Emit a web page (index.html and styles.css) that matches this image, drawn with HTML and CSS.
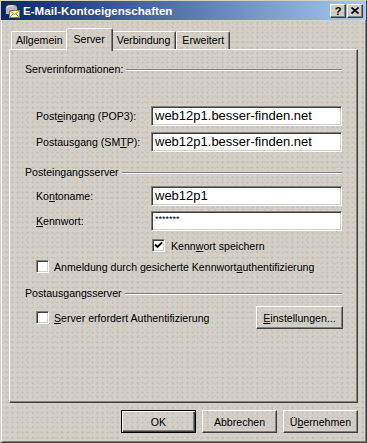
FILE: index.html
```html
<!DOCTYPE html>
<html>
<head>
    <meta charset="utf-8">
    <link rel="stylesheet" href="styles.css">
</head>
<body>
    <div class="window face">
        <!-- Titelleiste -->
        <div class="titleBar">
            <svg class="appIcon" width="16" height="16" viewBox="0 0 16 16">
                <path d="M1.5 5.5 Q1.5 1.5 6 1.5 L9 1.5 Q13.5 1.5 13.5 5.5 L13.5 11.5 L1.5 11.5 Z" fill="#b8b8b8" stroke="#303030"/>
                <path d="M3 5 Q3 3 6 3 L9 3" fill="none" stroke="#f0f0f0"/>
                <rect x="5.5" y="7.5" width="10" height="7" fill="#ffffb0" stroke="#808060"/>
                <path d="M5.5 7.5 L10.5 11.5 L15.5 7.5 M5.5 14.5 L9 11 M15.5 14.5 L12 11" fill="none" stroke="#a0a070"/>
            </svg>
            <span class="title">E-Mail-Kontoeigenschaften</span>
            <div class="capButtons">
                <span class="capBtn face">?</span>
                <span class="capBtn face">
                    <svg width="8" height="7" viewBox="0 0 8 7"><path d="M0.5 0.5 L7.5 6.5 M7.5 0.5 L0.5 6.5" stroke="#000" stroke-width="1.6"/></svg>
                </span>
            </div>
        </div>

        <div class="dialogBody">
            <!-- Registerkarten -->
            <div class="tabs">
                <div class="tab tabFirst">Allgemein</div>
                <div class="tab active face">Server</div>
                <div class="tab">Verbindung</div>
                <div class="tab">Erweitert</div>
            </div>

            <div class="panel">
                <div class="group">Serverinformationen:</div>

                <div class="field firstField">
                    <label>Post<u>e</u>ingang (POP3):</label>
                    <div class="textBox">web12p1.besser-finden.net</div>
                </div>
                <div class="field">
                    <label>Postausgang (SM<u>T</u>P):</label>
                    <div class="textBox">web12p1.besser-finden.net</div>
                </div>

                <div class="group groupNext">Posteingangsserver</div>

                <div class="field fieldTight">
                    <label>Ko<u>n</u>toname:</label>
                    <div class="textBox">web12p1</div>
                </div>
                <div class="field fieldTight2">
                    <label><u>K</u>ennwort:</label>
                    <div class="textBox password">*******</div>
                </div>

                <div class="check checkSave">
                    <span class="box"><svg width="9" height="9" viewBox="0 0 9 9"><path d="M1 3.5 L3.5 6 L8 1.5" fill="none" stroke="#000" stroke-width="1.8"/></svg></span>
                    <span>Kenn<u>w</u>ort speichern</span>
                </div>
                <div class="check checkSpa">
                    <span class="box"></span>
                    <span>Anmeldung durch gesicherte Kennwort<u>a</u>uthentifizierung</span>
                </div>

                <div class="group groupNext">Postausgangsserver</div>

                <div class="smtpRow">
                    <div class="check">
                        <span class="box"></span>
                        <span><u>S</u>erver erfordert Authentifizierung</span>
                    </div>
                    <div class="button settingsBtn"><u>E</u>instellungen...</div>
                </div>
            </div>

            <!-- Schaltflächen -->
            <div class="buttonRow">
                <div class="button default">OK</div>
                <div class="button">Abbrechen</div>
                <div class="button">Ü<u>b</u>ernehmen</div>
            </div>
        </div>
    </div>
</body>
</html>
```

FILE: styles.css
```css
html, body {
    margin: 0;
    padding: 0;
    background: #d4d0c8;
}

body {
    font-family: "Liberation Sans", Arial, sans-serif;
    font-size: 10.6px;
    color: #000;
}

/* Fläche mit leichter Körnung, fest am Fenster ausgerichtet */
.face {
    background-color: #d4d0c8;
    background-image:
        radial-gradient(circle, rgba(0, 0, 0, 0.07) 0.8px, transparent 1.3px),
        radial-gradient(circle, rgba(0, 0, 0, 0.05) 0.8px, transparent 1.3px);
    background-size: 5px 5px, 7px 6px;
    background-position: 0 0, 2px 3px;
    background-attachment: fixed;
}

.window {
    width: 367px;
    height: 443px;
    box-sizing: border-box;
    border: 1px solid;
    border-color: #d4d0c8 #404040 #404040 #d4d0c8;
    box-shadow: inset 1px 1px #fff, inset -1px -1px #808080;
    display: flex;
    flex-direction: column;
}

.titleBar {
    height: 19px;
    display: flex;
    align-items: center;
    background: linear-gradient(to right, #0a246a, #a6caf0);
    color: #fff;
    padding-left: 3px;
}

.appIcon {
    flex: none;
    margin-right: 3px;
}

.title {
    font-weight: bold;
    font-size: 11.6px;
    flex: 1 1 auto;
}

.capButtons {
    display: flex;
    gap: 1px;
    margin-right: 3px;
}

.capBtn {
    width: 16px;
    height: 14px;
    box-sizing: border-box;
    display: flex;
    align-items: center;
    justify-content: center;
    color: #000;
    font-weight: bold;
    font-size: 11px;
    border: 1px solid;
    border-color: #fff #404040 #404040 #fff;
    box-shadow: inset -1px -1px #808080;
}

.dialogBody {
    flex: 1 1 auto;
    padding: 8px 8px 0 8px;
    display: flex;
    flex-direction: column;
}

/* Registerkarten */
.tabs {
    display: flex;
    align-items: flex-end;
    height: 21px;
    padding-left: 2px;
}

.tab {
    height: 18px;
    box-sizing: border-box;
    line-height: 17px;
    padding: 0 5px;
    border-top: 1px solid #fff;
    border-left: 1px solid #fff;
    border-right: 1px solid #404040;
    border-radius: 2px 2px 0 0;
    box-shadow: inset -1px 0 #808080;
}

.tabFirst {
    padding: 0 4px;
}

.tab.active {
    height: 23px;
    margin: 0 -2px -2px -2px;
    padding: 1px 7px 0 7px;
    line-height: 18px;
    position: relative;
    z-index: 1;
}

.panel {
    height: 354px;
    box-sizing: border-box;
    border: 1px solid;
    border-color: #fff #404040 #404040 #fff;
    box-shadow: inset -1px -1px #808080;
    padding: 13px 15px 0 15px;
    display: flex;
    flex-direction: column;
}

.group {
    display: flex;
    align-items: center;
    height: 13px;
    line-height: 13px;
}

.group::after {
    content: "";
    flex: 1 1 auto;
    height: 0;
    border-top: 1px solid #808080;
    border-bottom: 1px solid #fff;
    margin-left: 3px;
}

.groupNext {
    margin-top: 14px;
}

.field {
    display: flex;
    align-items: center;
    margin-top: 6px;
    padding-left: 11px;
}

.firstField {
    margin-top: 30px;
}

.fieldTight {
    margin-top: 7px;
}

.fieldTight2 {
    margin-top: 5px;
}

.field label {
    width: 115px;
    flex: none;
}

.textBox {
    width: 191px;
    height: 20px;
    box-sizing: border-box;
    background: #fff;
    border: 1px solid;
    border-color: #808080 #fff #fff #808080;
    box-shadow: inset 1px 1px #404040, inset -1px -1px #d4d0c8;
    font-size: 13px;
    line-height: 18px;
    padding-left: 3px;
}

.password {
    font-size: 9px;
    line-height: 15px;
}

.check {
    display: flex;
    align-items: center;
    height: 13px;
    padding-left: 11px;
}

.checkSave {
    margin-top: 8px;
    padding-left: 127px;
}

.checkSpa {
    margin-top: 8px;
}

.box {
    width: 13px;
    height: 13px;
    box-sizing: border-box;
    flex: none;
    margin-right: 5px;
    background: #fff;
    border: 1px solid;
    border-color: #808080 #fff #fff #808080;
    box-shadow: inset 1px 1px #404040, inset -1px -1px #d4d0c8;
    display: flex;
    align-items: center;
    justify-content: center;
}

.checkSave .box {
    margin-right: 6px;
}

.smtpRow {
    display: flex;
    align-items: center;
    justify-content: space-between;
    margin-top: 6px;
    margin-right: -1px;
}

/* Schaltflächen */
.button {
    width: 75px;
    height: 23px;
    box-sizing: border-box;
    display: flex;
    align-items: center;
    justify-content: center;
    border: 1px solid;
    border-color: #fff #404040 #404040 #fff;
    box-shadow: inset -1px -1px #808080;
}

.settingsBtn {
    width: 87px;
}

.button.default {
    border: 1px solid #000;
    box-shadow: inset 1px 1px #fff, inset -1px -1px #404040, inset -2px -2px #808080;
}

.buttonRow {
    display: flex;
    justify-content: flex-end;
    gap: 6px;
    margin-top: 7px;
}
```
